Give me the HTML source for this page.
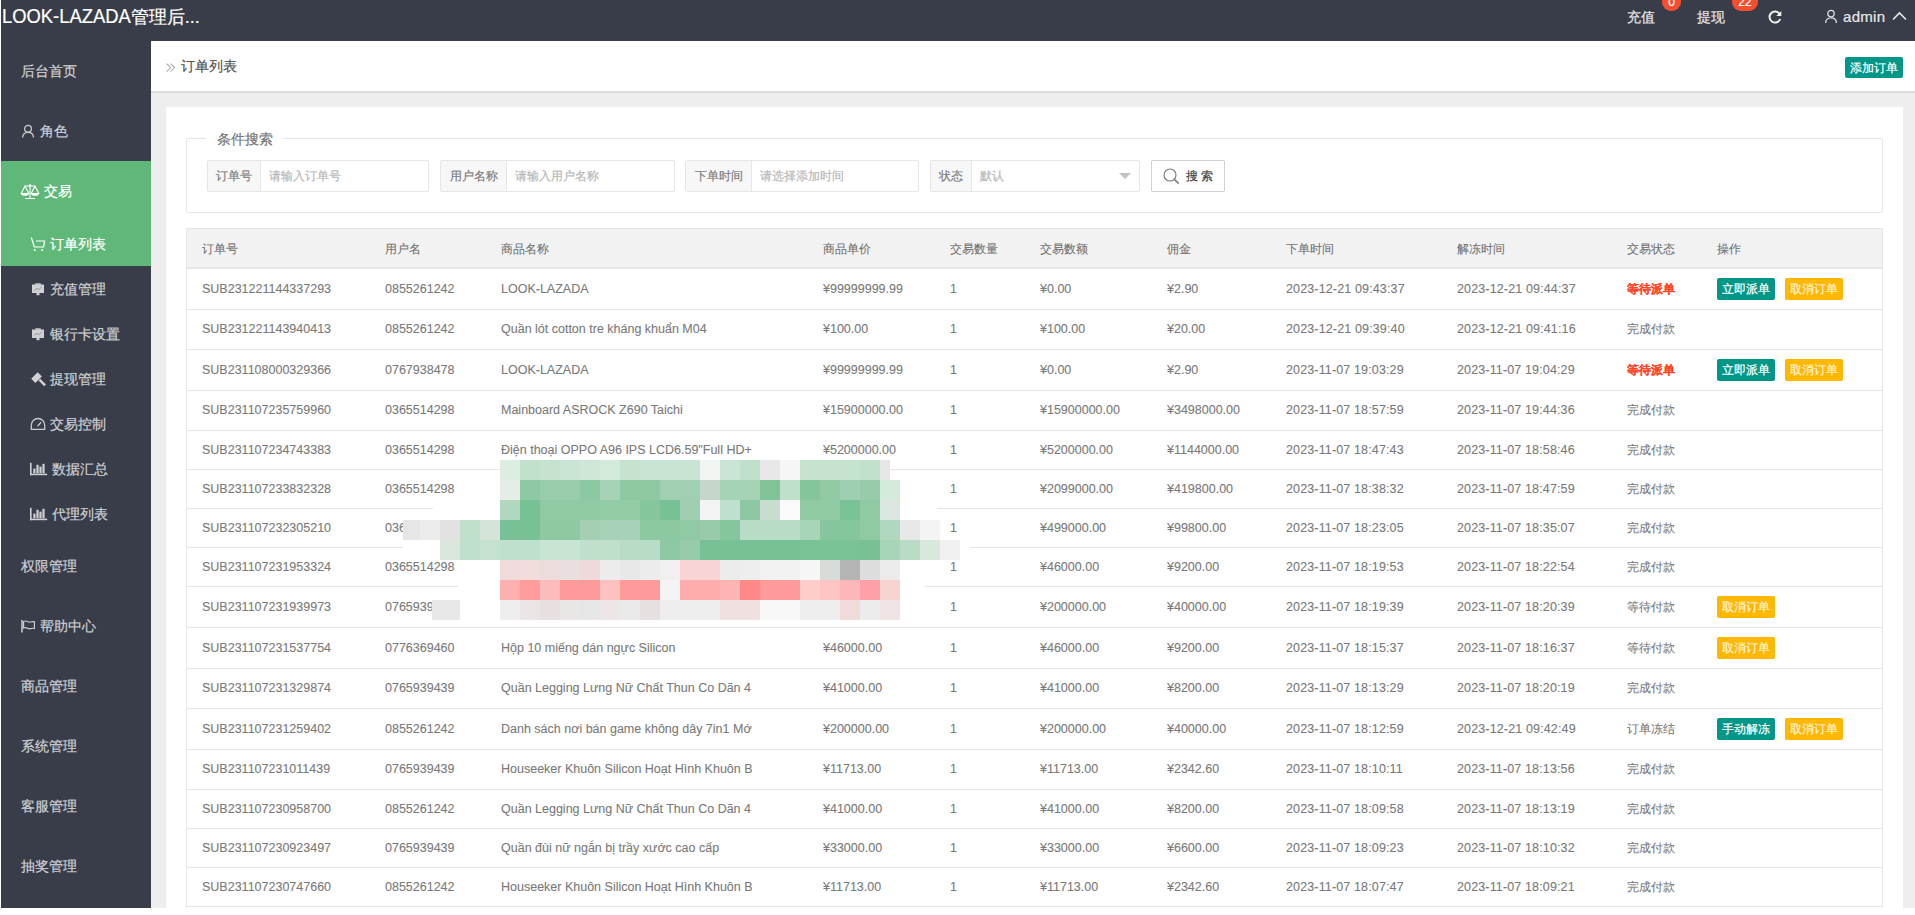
<!DOCTYPE html><html><head><meta charset="utf-8"><style>
*{margin:0;padding:0;box-sizing:border-box}
html,body{width:1915px;height:915px;overflow:hidden;background:#fff;font-family:"Liberation Sans",sans-serif;-webkit-text-stroke-width:0.2px}
.a{position:absolute;white-space:nowrap}
#hdr{position:absolute;left:1px;top:0;width:1914px;height:41px;background:#393D49}
#side{position:absolute;left:1px;top:41px;width:150px;height:867px;background:#393D49}
#main{position:absolute;left:151px;top:41px;width:1764px;height:867px;background:#eeeeee}
#bc{position:absolute;left:151px;top:41px;width:1764px;height:52px;background:#fff;border-bottom:2px solid #dcdcdc}
#card{position:absolute;left:166px;top:107px;width:1737px;height:801px;background:#fff}
.nv{position:absolute;color:#cfd0d3;font-size:14px;line-height:20px;height:20px}
.nv svg{position:absolute;top:3px}
.g{background:#5FB878}
.t{position:absolute;font-size:12.5px;color:#7a7a7a;-webkit-text-stroke-width:0.1px;line-height:16px;height:16px;white-space:nowrap;overflow:hidden}
.th{color:#737373}
.btn{position:absolute;height:22px;width:58px;color:#fff;font-size:12px;line-height:22px;text-align:center;border-radius:2px}
.teal{background:#009688}
.warm{background:#FFB800;color:#fff3dc}
.inp{position:absolute;top:160px;height:32px;border:1px solid #e6e6e6;border-radius:2px;background:#fff}
.lab{position:absolute;left:0;top:0;height:30px;background:#f7f7f7;border-right:1px solid #e6e6e6;color:#7e7e7e;font-size:12px;line-height:30px;text-align:center}
.ph{position:absolute;top:0;height:30px;line-height:30px;color:#b8b8b8;font-size:12px;white-space:nowrap}
</style></head><body>
<div id="hdr"></div><div id="side"></div><div id="main"></div><div id="bc"></div><div id="card"></div>
<div class="a" style="left:2px;top:5px;font-size:18px;line-height:24px;color:#fff"><span style="display:inline-block;font-size:18.4px;transform:scaleY(1.1);transform-origin:0 18px">LOOK-LAZADA</span>管理后...</div>
<div class="a" style="left:1627px;top:6.5px;font-size:14px;line-height:20px;color:#e8e8e8">充值</div>
<div class="a" style="left:1697px;top:6.5px;font-size:14px;line-height:20px;color:#e8e8e8">提现</div>
<div class="a" style="left:1662px;top:-7px;width:19px;height:18px;border-radius:9px;background:#F4502F;color:#fff;font-size:12px;line-height:18px;text-align:center">0</div>
<div class="a" style="left:1732px;top:-7px;width:26px;height:18px;border-radius:9px;background:#F4502F;color:#fff;font-size:12px;line-height:18px;text-align:center">22</div>
<svg class="a" style="left:1767px;top:9px" width="16" height="16" viewBox="0 0 16 16"><path d="M12.6 5.0A5.5 5.5 0 1 0 13.2 10" fill="none" stroke="#f2f2f2" stroke-width="2"/><path d="M14.3 2v5H9.3z" fill="#f2f2f2"/></svg>
<svg class="a" style="left:1824px;top:9px" width="14" height="15" viewBox="0 0 14 15"><circle cx="7" cy="4.6" r="3.2" fill="none" stroke="#e0e0e0" stroke-width="1.3"/><path d="M1.6 14c0-3.2 2.3-5.2 5.4-5.2s5.4 2 5.4 5.2" fill="none" stroke="#e0e0e0" stroke-width="1.3"/></svg>
<div class="a" style="left:1843px;top:6.5px;font-size:15px;line-height:20px;color:#e8e8e8;letter-spacing:0.3px">admin</div>
<svg class="a" style="left:1892px;top:11px" width="15" height="10" viewBox="0 0 15 10"><path d="M1 8.5L7.5 2L14 8.5" fill="none" stroke="#e8e8e8" stroke-width="1.6"/></svg>
<div class="a g" style="left:1px;top:161px;width:150px;height:105px"></div>
<svg class="a" style="left:21px;top:124px" width="14" height="15" viewBox="0 0 14 15"><circle cx="7" cy="4.8" r="3.4" fill="none" stroke="#c9cacd" stroke-width="1.3"/><path d="M1.6 13.6c0-3.3 2.3-5.3 5.4-5.3s5.4 2 5.4 5.3" fill="none" stroke="#c9cacd" stroke-width="1.3"/></svg>
<svg class="a" style="left:20px;top:183px" width="20" height="17" viewBox="0 0 20 17"><g fill="none" stroke="#fff" stroke-width="1.1"><path d="M5 3h10M10 2.5v12.5M5 15.5h10"/><path d="M5 3L1.2 10.5h7.6z M15 3l-3.8 7.5h7.6z"/></g><path d="M1 10.5h8c0 1.6-1.8 2.3-4 2.3s-4-.7-4-2.3zM11 10.5h8c0 1.6-1.8 2.3-4 2.3s-4-.7-4-2.3z" fill="#fff"/><circle cx="10" cy="2.5" r="1.3" fill="#fff"/></svg>
<svg class="a" style="left:30px;top:236px" width="16" height="16" viewBox="0 0 16 16"><g fill="none" stroke="#fff" stroke-width="1.2"><path d="M1.3 1.5L4.4 11M6 5h8.6l-1 6H4.4"/></g><circle cx="4.8" cy="14" r="1" fill="#fff"/><circle cx="12.2" cy="14" r="1" fill="#fff"/></svg>
<svg class="a" style="left:31px;top:283px" width="14" height="13" viewBox="0 0 14 13"><rect x="1" y="1.5" width="12" height="8.5" fill="#d0d1d4"/><rect x="4.3" y="0.3" width="5.5" height="1.5" fill="#d0d1d4"/><rect x="5.5" y="10" width="3" height="2.2" fill="#d0d1d4"/><path d="M3.3 7.3l2.5-2 2 1.3 3-2.6" stroke="#8a8c92" stroke-width="0.9" fill="none"/></svg>
<svg class="a" style="left:31px;top:328px" width="14" height="13" viewBox="0 0 14 13"><rect x="1" y="1.5" width="12" height="8.5" fill="#d0d1d4"/><rect x="4.3" y="0.3" width="5.5" height="1.5" fill="#d0d1d4"/><rect x="5.5" y="10" width="3" height="2.2" fill="#d0d1d4"/><path d="M3.3 7.3l2.5-2 2 1.3 3-2.6" stroke="#8a8c92" stroke-width="0.9" fill="none"/></svg>
<svg class="a" style="left:30px;top:371px" width="17" height="17" viewBox="0 0 17 17"><g fill="#d0d1d4"><path d="M1.2 7.7L7.7 1.2l4.2 4.2-6.5 6.5z"/><path d="M8.5 9.6l1.8-1.8 5.7 5.7-1.8 1.8z"/></g></svg>
<svg class="a" style="left:30px;top:417px" width="16" height="14" viewBox="0 0 16 14"><path d="M1.3 12.3V8.2a6.7 6.7 0 0 1 13.4 0v4.1z" fill="none" stroke="#c9cacd" stroke-width="1.3"/><path d="M7.5 9.2l3.6-3.9" stroke="#c9cacd" stroke-width="1.3"/></svg>
<svg class="a" style="left:29px;top:462px" width="19" height="14" viewBox="0 0 19 14"><g fill="#d0d1d4"><rect x="1" y="0.8" width="1.6" height="12.4"/><rect x="1" y="11.6" width="17.2" height="1.6"/><rect x="4.3" y="6.6" width="2.2" height="4.6"/><rect x="7.4" y="2.8" width="2.2" height="8.4"/><rect x="10.4" y="4.6" width="2.2" height="6.6"/><rect x="13.4" y="1.8" width="2.2" height="9.4"/></g></svg>
<svg class="a" style="left:29px;top:507px" width="19" height="14" viewBox="0 0 19 14"><g fill="#d0d1d4"><rect x="1" y="0.8" width="1.6" height="12.4"/><rect x="1" y="11.6" width="17.2" height="1.6"/><rect x="4.3" y="6.6" width="2.2" height="4.6"/><rect x="7.4" y="2.8" width="2.2" height="8.4"/><rect x="10.4" y="4.6" width="2.2" height="6.6"/><rect x="13.4" y="1.8" width="2.2" height="9.4"/></g></svg>
<svg class="a" style="left:20px;top:619px" width="17" height="14" viewBox="0 0 17 14"><path d="M2 1v12.5" stroke="#c9cacd" stroke-width="1.6"/><path d="M3.6 2.4c2.5-1.5 4.2 1.3 7 .6 1.3-.3 2.6-.5 3.8-.3v6.6c-1.2-.2-2.5 0-3.8.3-2.8.7-4.5-2.1-7-.6z" fill="none" stroke="#c9cacd" stroke-width="1.2"/></svg>
<div class="nv" style="left:21px;top:61px;color:#cfd0d3">后台首页</div>
<div class="nv" style="left:40px;top:121px;color:#cfd0d3">角色</div>
<div class="nv" style="left:44px;top:181px;color:#fff">交易</div>
<div class="nv" style="left:50px;top:234px;color:#fff">订单列表</div>
<div class="nv" style="left:50px;top:279px;color:#cfd0d3">充值管理</div>
<div class="nv" style="left:50px;top:324px;color:#cfd0d3">银行卡设置</div>
<div class="nv" style="left:50px;top:369px;color:#cfd0d3">提现管理</div>
<div class="nv" style="left:50px;top:414px;color:#cfd0d3">交易控制</div>
<div class="nv" style="left:52px;top:459px;color:#cfd0d3">数据汇总</div>
<div class="nv" style="left:52px;top:504px;color:#cfd0d3">代理列表</div>
<div class="nv" style="left:21px;top:556px;color:#cfd0d3">权限管理</div>
<div class="nv" style="left:40px;top:616px;color:#cfd0d3">帮助中心</div>
<div class="nv" style="left:21px;top:676px;color:#cfd0d3">商品管理</div>
<div class="nv" style="left:21px;top:736px;color:#cfd0d3">系统管理</div>
<div class="nv" style="left:21px;top:796px;color:#cfd0d3">客服管理</div>
<div class="nv" style="left:21px;top:856px;color:#cfd0d3">抽奖管理</div>
<svg class="a" style="left:166px;top:63px" width="10" height="10" viewBox="0 0 10 10"><path d="M0.6 0.6L4.6 4.6L0.6 8.6M4.6 0.6L8.6 4.6L4.6 8.6" fill="none" stroke="#aaa" stroke-width="1.1"/></svg>
<div class="a" style="left:181px;top:56px;font-size:14px;line-height:20px;color:#555">订单列表</div>
<div class="btn teal" style="left:1845px;top:57px;height:21px">添加订单</div>
<div class="a" style="left:186px;top:138px;width:1697px;height:75px;border:1px solid #e6e6e6;border-radius:2px"></div>
<div class="a" style="left:206px;top:130px;width:77px;height:16px;background:#fff"></div>
<div class="a" style="left:217px;top:129px;font-size:14px;line-height:20px;color:#777">条件搜索</div>
<div class="inp" style="left:207px;width:222px"><div class="lab" style="width:53px">订单号</div><div class="ph" style="left:61px">请输入订单号</div></div>
<div class="inp" style="left:440px;width:235px"><div class="lab" style="width:66px">用户名称</div><div class="ph" style="left:74px">请输入用户名称</div></div>
<div class="inp" style="left:685px;width:234px"><div class="lab" style="width:66px">下单时间</div><div class="ph" style="left:74px">请选择添加时间</div></div>
<div class="inp" style="left:930px;width:210px"><div class="lab" style="width:41px">状态</div><div class="ph" style="left:49px">默认</div></div>
<svg class="a" style="left:1119px;top:172.5px" width="12" height="7" viewBox="0 0 12 7"><path d="M0 0h12L6 6z" fill="#c2c2c2"/></svg>
<div class="a" style="left:1151px;top:160px;width:74px;height:32px;border:1px solid #d2d2d2;border-radius:2px;background:#fff"></div>
<svg class="a" style="left:1162px;top:166.5px" width="19" height="19" viewBox="0 0 19 19"><circle cx="8" cy="8" r="6" fill="none" stroke="#808080" stroke-width="1.2"/><path d="M12.4 12.4l4.3 4.3" stroke="#808080" stroke-width="1.7"/></svg>
<div class="a" style="left:1186px;top:167px;font-size:12px;line-height:18px;color:#444;letter-spacing:3px">搜索</div>
<div class="a" style="left:186px;top:228px;width:1697px;height:40px;background:#f2f2f2;border:1px solid #e6e6e6"></div>
<div class="a" style="left:186px;top:228px;width:1px;height:680px;background:#e6e6e6"></div>
<div class="a" style="left:1882px;top:228px;width:1px;height:680px;background:#e6e6e6"></div>
<div class="a" style="left:186px;top:268px;width:1697px;height:1px;background:#e6e6e6"></div>
<div class="a" style="left:186px;top:309px;width:1697px;height:1px;background:#e6e6e6"></div>
<div class="a" style="left:186px;top:349px;width:1697px;height:1px;background:#e6e6e6"></div>
<div class="a" style="left:186px;top:390px;width:1697px;height:1px;background:#e6e6e6"></div>
<div class="a" style="left:186px;top:430px;width:1697px;height:1px;background:#e6e6e6"></div>
<div class="a" style="left:186px;top:469px;width:1697px;height:1px;background:#e6e6e6"></div>
<div class="a" style="left:186px;top:508px;width:1697px;height:1px;background:#e6e6e6"></div>
<div class="a" style="left:186px;top:547px;width:1697px;height:1px;background:#e6e6e6"></div>
<div class="a" style="left:186px;top:586px;width:1697px;height:1px;background:#e6e6e6"></div>
<div class="a" style="left:186px;top:627px;width:1697px;height:1px;background:#e6e6e6"></div>
<div class="a" style="left:186px;top:668px;width:1697px;height:1px;background:#e6e6e6"></div>
<div class="a" style="left:186px;top:708px;width:1697px;height:1px;background:#e6e6e6"></div>
<div class="a" style="left:186px;top:749px;width:1697px;height:1px;background:#e6e6e6"></div>
<div class="a" style="left:186px;top:789px;width:1697px;height:1px;background:#e6e6e6"></div>
<div class="a" style="left:186px;top:828px;width:1697px;height:1px;background:#e6e6e6"></div>
<div class="a" style="left:186px;top:867px;width:1697px;height:1px;background:#e6e6e6"></div>
<div class="a" style="left:186px;top:906px;width:1697px;height:1px;background:#e6e6e6"></div>
<div class="t th" style="left:202px;top:241px"><span style="font-size:12px">订单号</span></div>
<div class="t th" style="left:385px;top:241px"><span style="font-size:12px">用户名</span></div>
<div class="t th" style="left:501px;top:241px"><span style="font-size:12px">商品名称</span></div>
<div class="t th" style="left:823px;top:241px"><span style="font-size:12px">商品单价</span></div>
<div class="t th" style="left:950px;top:241px"><span style="font-size:12px">交易数量</span></div>
<div class="t th" style="left:1040px;top:241px"><span style="font-size:12px">交易数额</span></div>
<div class="t th" style="left:1167px;top:241px"><span style="font-size:12px">佣金</span></div>
<div class="t th" style="left:1286px;top:241px"><span style="font-size:12px">下单时间</span></div>
<div class="t th" style="left:1457px;top:241px"><span style="font-size:12px">解冻时间</span></div>
<div class="t th" style="left:1627px;top:241px"><span style="font-size:12px">交易状态</span></div>
<div class="t th" style="left:1717px;top:241px"><span style="font-size:12px">操作</span></div>
<div class="t" style="left:202px;top:280.5px;">SUB231221144337293</div>
<div class="t" style="left:385px;top:280.5px;">0855261242</div>
<div class="t" style="left:501px;top:280.5px;width:251px;">LOOK-LAZADA</div>
<div class="t" style="left:823px;top:280.5px;">¥99999999.99</div>
<div class="t" style="left:950px;top:280.5px;">1</div>
<div class="t" style="left:1040px;top:280.5px;">¥0.00</div>
<div class="t" style="left:1167px;top:280.5px;">¥2.90</div>
<div class="t" style="left:1286px;top:280.5px;letter-spacing:0.14px;">2023-12-21 09:43:37</div>
<div class="t" style="left:1457px;top:280.5px;letter-spacing:0.14px;">2023-12-21 09:44:37</div>
<div class="t" style="left:1627px;top:280.5px;color:#FF4628;font-weight:bold;"><span style="font-size:12px">等待派单</span></div>
<div class="btn teal" style="left:1717px;top:277.5px">立即派单</div>
<div class="btn warm" style="left:1785px;top:277.5px">取消订单</div>
<div class="t" style="left:202px;top:321.0px;">SUB231221143940413</div>
<div class="t" style="left:385px;top:321.0px;">0855261242</div>
<div class="t" style="left:501px;top:321.0px;width:251px;">Quần lót cotton tre kháng khuẩn M04</div>
<div class="t" style="left:823px;top:321.0px;">¥100.00</div>
<div class="t" style="left:950px;top:321.0px;">1</div>
<div class="t" style="left:1040px;top:321.0px;">¥100.00</div>
<div class="t" style="left:1167px;top:321.0px;">¥20.00</div>
<div class="t" style="left:1286px;top:321.0px;letter-spacing:0.14px;">2023-12-21 09:39:40</div>
<div class="t" style="left:1457px;top:321.0px;letter-spacing:0.14px;">2023-12-21 09:41:16</div>
<div class="t" style="left:1627px;top:321.0px;"><span style="font-size:12px">完成付款</span></div>
<div class="t" style="left:202px;top:361.5px;">SUB231108000329366</div>
<div class="t" style="left:385px;top:361.5px;">0767938478</div>
<div class="t" style="left:501px;top:361.5px;width:251px;">LOOK-LAZADA</div>
<div class="t" style="left:823px;top:361.5px;">¥99999999.99</div>
<div class="t" style="left:950px;top:361.5px;">1</div>
<div class="t" style="left:1040px;top:361.5px;">¥0.00</div>
<div class="t" style="left:1167px;top:361.5px;">¥2.90</div>
<div class="t" style="left:1286px;top:361.5px;letter-spacing:0.14px;">2023-11-07 19:03:29</div>
<div class="t" style="left:1457px;top:361.5px;letter-spacing:0.14px;">2023-11-07 19:04:29</div>
<div class="t" style="left:1627px;top:361.5px;color:#FF4628;font-weight:bold;"><span style="font-size:12px">等待派单</span></div>
<div class="btn teal" style="left:1717px;top:358.5px">立即派单</div>
<div class="btn warm" style="left:1785px;top:358.5px">取消订单</div>
<div class="t" style="left:202px;top:402.0px;">SUB231107235759960</div>
<div class="t" style="left:385px;top:402.0px;">0365514298</div>
<div class="t" style="left:501px;top:402.0px;width:251px;">Mainboard ASROCK Z690 Taichi</div>
<div class="t" style="left:823px;top:402.0px;">¥15900000.00</div>
<div class="t" style="left:950px;top:402.0px;">1</div>
<div class="t" style="left:1040px;top:402.0px;">¥15900000.00</div>
<div class="t" style="left:1167px;top:402.0px;">¥3498000.00</div>
<div class="t" style="left:1286px;top:402.0px;letter-spacing:0.14px;">2023-11-07 18:57:59</div>
<div class="t" style="left:1457px;top:402.0px;letter-spacing:0.14px;">2023-11-07 19:44:36</div>
<div class="t" style="left:1627px;top:402.0px;"><span style="font-size:12px">完成付款</span></div>
<div class="t" style="left:202px;top:441.5px;">SUB231107234743383</div>
<div class="t" style="left:385px;top:441.5px;">0365514298</div>
<div class="t" style="left:501px;top:441.5px;width:251px;">Điện thoại OPPO A96 IPS LCD6.59&quot;Full HD+</div>
<div class="t" style="left:823px;top:441.5px;">¥5200000.00</div>
<div class="t" style="left:950px;top:441.5px;">1</div>
<div class="t" style="left:1040px;top:441.5px;">¥5200000.00</div>
<div class="t" style="left:1167px;top:441.5px;">¥1144000.00</div>
<div class="t" style="left:1286px;top:441.5px;letter-spacing:0.14px;">2023-11-07 18:47:43</div>
<div class="t" style="left:1457px;top:441.5px;letter-spacing:0.14px;">2023-11-07 18:58:46</div>
<div class="t" style="left:1627px;top:441.5px;"><span style="font-size:12px">完成付款</span></div>
<div class="t" style="left:202px;top:480.5px;">SUB231107233832328</div>
<div class="t" style="left:385px;top:480.5px;">0365514298</div>
<div class="t" style="left:950px;top:480.5px;">1</div>
<div class="t" style="left:1040px;top:480.5px;">¥2099000.00</div>
<div class="t" style="left:1167px;top:480.5px;">¥419800.00</div>
<div class="t" style="left:1286px;top:480.5px;letter-spacing:0.14px;">2023-11-07 18:38:32</div>
<div class="t" style="left:1457px;top:480.5px;letter-spacing:0.14px;">2023-11-07 18:47:59</div>
<div class="t" style="left:1627px;top:480.5px;"><span style="font-size:12px">完成付款</span></div>
<div class="t" style="left:202px;top:519.5px;">SUB231107232305210</div>
<div class="t" style="left:385px;top:519.5px;">0365514298</div>
<div class="t" style="left:950px;top:519.5px;">1</div>
<div class="t" style="left:1040px;top:519.5px;">¥499000.00</div>
<div class="t" style="left:1167px;top:519.5px;">¥99800.00</div>
<div class="t" style="left:1286px;top:519.5px;letter-spacing:0.14px;">2023-11-07 18:23:05</div>
<div class="t" style="left:1457px;top:519.5px;letter-spacing:0.14px;">2023-11-07 18:35:07</div>
<div class="t" style="left:1627px;top:519.5px;"><span style="font-size:12px">完成付款</span></div>
<div class="t" style="left:202px;top:558.5px;">SUB231107231953324</div>
<div class="t" style="left:385px;top:558.5px;">0365514298</div>
<div class="t" style="left:950px;top:558.5px;">1</div>
<div class="t" style="left:1040px;top:558.5px;">¥46000.00</div>
<div class="t" style="left:1167px;top:558.5px;">¥9200.00</div>
<div class="t" style="left:1286px;top:558.5px;letter-spacing:0.14px;">2023-11-07 18:19:53</div>
<div class="t" style="left:1457px;top:558.5px;letter-spacing:0.14px;">2023-11-07 18:22:54</div>
<div class="t" style="left:1627px;top:558.5px;"><span style="font-size:12px">完成付款</span></div>
<div class="t" style="left:202px;top:598.5px;">SUB231107231939973</div>
<div class="t" style="left:385px;top:598.5px;">0765939439</div>
<div class="t" style="left:950px;top:598.5px;">1</div>
<div class="t" style="left:1040px;top:598.5px;">¥200000.00</div>
<div class="t" style="left:1167px;top:598.5px;">¥40000.00</div>
<div class="t" style="left:1286px;top:598.5px;letter-spacing:0.14px;">2023-11-07 18:19:39</div>
<div class="t" style="left:1457px;top:598.5px;letter-spacing:0.14px;">2023-11-07 18:20:39</div>
<div class="t" style="left:1627px;top:598.5px;"><span style="font-size:12px">等待付款</span></div>
<div class="btn warm" style="left:1717px;top:595.5px">取消订单</div>
<div class="t" style="left:202px;top:639.5px;">SUB231107231537754</div>
<div class="t" style="left:385px;top:639.5px;">0776369460</div>
<div class="t" style="left:501px;top:639.5px;width:251px;">Hộp 10 miếng dán ngực Silicon</div>
<div class="t" style="left:823px;top:639.5px;">¥46000.00</div>
<div class="t" style="left:950px;top:639.5px;">1</div>
<div class="t" style="left:1040px;top:639.5px;">¥46000.00</div>
<div class="t" style="left:1167px;top:639.5px;">¥9200.00</div>
<div class="t" style="left:1286px;top:639.5px;letter-spacing:0.14px;">2023-11-07 18:15:37</div>
<div class="t" style="left:1457px;top:639.5px;letter-spacing:0.14px;">2023-11-07 18:16:37</div>
<div class="t" style="left:1627px;top:639.5px;"><span style="font-size:12px">等待付款</span></div>
<div class="btn warm" style="left:1717px;top:636.5px">取消订单</div>
<div class="t" style="left:202px;top:680.0px;">SUB231107231329874</div>
<div class="t" style="left:385px;top:680.0px;">0765939439</div>
<div class="t" style="left:501px;top:680.0px;width:251px;">Quần Legging Lưng Nữ Chất Thun Co Dãn 4 Chiều</div>
<div class="t" style="left:823px;top:680.0px;">¥41000.00</div>
<div class="t" style="left:950px;top:680.0px;">1</div>
<div class="t" style="left:1040px;top:680.0px;">¥41000.00</div>
<div class="t" style="left:1167px;top:680.0px;">¥8200.00</div>
<div class="t" style="left:1286px;top:680.0px;letter-spacing:0.14px;">2023-11-07 18:13:29</div>
<div class="t" style="left:1457px;top:680.0px;letter-spacing:0.14px;">2023-11-07 18:20:19</div>
<div class="t" style="left:1627px;top:680.0px;"><span style="font-size:12px">完成付款</span></div>
<div class="t" style="left:202px;top:720.5px;">SUB231107231259402</div>
<div class="t" style="left:385px;top:720.5px;">0855261242</div>
<div class="t" style="left:501px;top:720.5px;width:251px;">Danh sách nơi bán game không dây 7in1 Mới</div>
<div class="t" style="left:823px;top:720.5px;">¥200000.00</div>
<div class="t" style="left:950px;top:720.5px;">1</div>
<div class="t" style="left:1040px;top:720.5px;">¥200000.00</div>
<div class="t" style="left:1167px;top:720.5px;">¥40000.00</div>
<div class="t" style="left:1286px;top:720.5px;letter-spacing:0.14px;">2023-11-07 18:12:59</div>
<div class="t" style="left:1457px;top:720.5px;letter-spacing:0.14px;">2023-12-21 09:42:49</div>
<div class="t" style="left:1627px;top:720.5px;"><span style="font-size:12px">订单冻结</span></div>
<div class="btn teal" style="left:1717px;top:717.5px">手动解冻</div>
<div class="btn warm" style="left:1785px;top:717.5px">取消订单</div>
<div class="t" style="left:202px;top:761.0px;">SUB231107231011439</div>
<div class="t" style="left:385px;top:761.0px;">0765939439</div>
<div class="t" style="left:501px;top:761.0px;width:251px;">Houseeker Khuôn Silicon Hoạt Hình Khuôn Bánh</div>
<div class="t" style="left:823px;top:761.0px;">¥11713.00</div>
<div class="t" style="left:950px;top:761.0px;">1</div>
<div class="t" style="left:1040px;top:761.0px;">¥11713.00</div>
<div class="t" style="left:1167px;top:761.0px;">¥2342.60</div>
<div class="t" style="left:1286px;top:761.0px;letter-spacing:0.14px;">2023-11-07 18:10:11</div>
<div class="t" style="left:1457px;top:761.0px;letter-spacing:0.14px;">2023-11-07 18:13:56</div>
<div class="t" style="left:1627px;top:761.0px;"><span style="font-size:12px">完成付款</span></div>
<div class="t" style="left:202px;top:800.5px;">SUB231107230958700</div>
<div class="t" style="left:385px;top:800.5px;">0855261242</div>
<div class="t" style="left:501px;top:800.5px;width:251px;">Quần Legging Lưng Nữ Chất Thun Co Dãn 4 Chiều</div>
<div class="t" style="left:823px;top:800.5px;">¥41000.00</div>
<div class="t" style="left:950px;top:800.5px;">1</div>
<div class="t" style="left:1040px;top:800.5px;">¥41000.00</div>
<div class="t" style="left:1167px;top:800.5px;">¥8200.00</div>
<div class="t" style="left:1286px;top:800.5px;letter-spacing:0.14px;">2023-11-07 18:09:58</div>
<div class="t" style="left:1457px;top:800.5px;letter-spacing:0.14px;">2023-11-07 18:13:19</div>
<div class="t" style="left:1627px;top:800.5px;"><span style="font-size:12px">完成付款</span></div>
<div class="t" style="left:202px;top:839.5px;">SUB231107230923497</div>
<div class="t" style="left:385px;top:839.5px;">0765939439</div>
<div class="t" style="left:501px;top:839.5px;width:251px;">Quần đùi nữ ngắn bị trầy xước cao cấp</div>
<div class="t" style="left:823px;top:839.5px;">¥33000.00</div>
<div class="t" style="left:950px;top:839.5px;">1</div>
<div class="t" style="left:1040px;top:839.5px;">¥33000.00</div>
<div class="t" style="left:1167px;top:839.5px;">¥6600.00</div>
<div class="t" style="left:1286px;top:839.5px;letter-spacing:0.14px;">2023-11-07 18:09:23</div>
<div class="t" style="left:1457px;top:839.5px;letter-spacing:0.14px;">2023-11-07 18:10:32</div>
<div class="t" style="left:1627px;top:839.5px;"><span style="font-size:12px">完成付款</span></div>
<div class="t" style="left:202px;top:878.5px;">SUB231107230747660</div>
<div class="t" style="left:385px;top:878.5px;">0855261242</div>
<div class="t" style="left:501px;top:878.5px;width:251px;">Houseeker Khuôn Silicon Hoạt Hình Khuôn Bánh</div>
<div class="t" style="left:823px;top:878.5px;">¥11713.00</div>
<div class="t" style="left:950px;top:878.5px;">1</div>
<div class="t" style="left:1040px;top:878.5px;">¥11713.00</div>
<div class="t" style="left:1167px;top:878.5px;">¥2342.60</div>
<div class="t" style="left:1286px;top:878.5px;letter-spacing:0.14px;">2023-11-07 18:07:47</div>
<div class="t" style="left:1457px;top:878.5px;letter-spacing:0.14px;">2023-11-07 18:09:21</div>
<div class="t" style="left:1627px;top:878.5px;"><span style="font-size:12px">完成付款</span></div>
<div class="a" style="left:403px;top:545px;width:37px;height:4px;background:#fff"></div>
<div class="a" style="left:958px;top:545px;width:12px;height:4px;background:#fff"></div>
<div class="a" style="left:433px;top:506px;width:67px;height:4px;background:#fff"></div>
<div class="a" style="left:458px;top:584px;width:42px;height:4px;background:#fff"></div>
<div class="a" style="left:900px;top:506px;width:37px;height:4px;background:#fff"></div>
<div class="a" style="left:900px;top:584px;width:25px;height:4px;background:#fff"></div>
<svg class="a" style="left:400px;top:460px" width="560" height="160" viewBox="0 0 560 160"><rect x="100" y="0" width="20" height="20" fill="#dcede2"/><rect x="120" y="0" width="20" height="20" fill="#c2e1cd"/><rect x="140" y="0" width="20" height="20" fill="#c6e3d0"/><rect x="160" y="0" width="20" height="20" fill="#cbe5d4"/><rect x="180" y="0" width="20" height="20" fill="#cfe7d7"/><rect x="200" y="0" width="20" height="20" fill="#d3e9da"/><rect x="220" y="0" width="20" height="20" fill="#c5e2cf"/><rect x="240" y="0" width="20" height="20" fill="#c8e4d2"/><rect x="260" y="0" width="20" height="20" fill="#c8e4d2"/><rect x="280" y="0" width="20" height="20" fill="#c8e4d2"/><rect x="300" y="0" width="20" height="20" fill="#f2f6f3"/><rect x="320" y="0" width="20" height="20" fill="#cbe5d4"/><rect x="340" y="0" width="20" height="20" fill="#bfe0cb"/><rect x="360" y="0" width="20" height="20" fill="#e8e8e8"/><rect x="380" y="0" width="20" height="20" fill="#f6f6f6"/><rect x="400" y="0" width="20" height="20" fill="#c6e3d0"/><rect x="420" y="0" width="20" height="20" fill="#c6e3d0"/><rect x="440" y="0" width="20" height="20" fill="#c6e3d0"/><rect x="460" y="0" width="20" height="20" fill="#c2e1cd"/><rect x="100" y="20" width="20" height="20" fill="#e6ece8"/><rect x="120" y="20" width="20" height="20" fill="#8fc9a4"/><rect x="140" y="20" width="20" height="20" fill="#98cdab"/><rect x="160" y="20" width="20" height="20" fill="#98cdab"/><rect x="180" y="20" width="20" height="20" fill="#8cc8a2"/><rect x="200" y="20" width="20" height="20" fill="#a6d3b6"/><rect x="220" y="20" width="20" height="20" fill="#8fc9a4"/><rect x="240" y="20" width="20" height="20" fill="#8fc9a4"/><rect x="260" y="20" width="20" height="20" fill="#a0d0b1"/><rect x="280" y="20" width="20" height="20" fill="#a0d0b1"/><rect x="300" y="20" width="20" height="20" fill="#c6d6ca"/><rect x="320" y="20" width="20" height="20" fill="#a6d3b6"/><rect x="340" y="20" width="20" height="20" fill="#a6d3b6"/><rect x="360" y="20" width="20" height="20" fill="#80c397"/><rect x="380" y="20" width="20" height="20" fill="#bfe0cb"/><rect x="400" y="20" width="20" height="20" fill="#84c59b"/><rect x="420" y="20" width="20" height="20" fill="#90c9a4"/><rect x="440" y="20" width="20" height="20" fill="#9fcfb0"/><rect x="460" y="20" width="20" height="20" fill="#98cba9"/><rect x="480" y="20" width="20" height="20" fill="#d4eadb"/><rect x="100" y="40" width="20" height="20" fill="#b0d8bf"/><rect x="120" y="40" width="20" height="20" fill="#78c196"/><rect x="140" y="40" width="20" height="20" fill="#90caa5"/><rect x="160" y="40" width="20" height="20" fill="#90caa5"/><rect x="180" y="40" width="20" height="20" fill="#90caa5"/><rect x="200" y="40" width="20" height="20" fill="#93cca7"/><rect x="220" y="40" width="20" height="20" fill="#93cca7"/><rect x="240" y="40" width="20" height="20" fill="#85c69e"/><rect x="260" y="40" width="20" height="20" fill="#78c196"/><rect x="280" y="40" width="20" height="20" fill="#9fcfb0"/><rect x="300" y="40" width="20" height="20" fill="#f4f4f4"/><rect x="320" y="40" width="20" height="20" fill="#bfe0cc"/><rect x="340" y="40" width="20" height="20" fill="#8cc9a2"/><rect x="360" y="40" width="20" height="20" fill="#c8dccf"/><rect x="380" y="40" width="20" height="20" fill="#fafafa"/><rect x="400" y="40" width="20" height="20" fill="#90caa5"/><rect x="420" y="40" width="20" height="20" fill="#90caa5"/><rect x="440" y="40" width="20" height="20" fill="#7ac396"/><rect x="460" y="40" width="20" height="20" fill="#90caa5"/><rect x="480" y="40" width="20" height="20" fill="#dce8df"/><rect x="100" y="60" width="20" height="20" fill="#78c196"/><rect x="120" y="60" width="20" height="20" fill="#78c196"/><rect x="140" y="60" width="20" height="20" fill="#8ec9a3"/><rect x="160" y="60" width="20" height="20" fill="#8ec9a3"/><rect x="180" y="60" width="20" height="20" fill="#a4cfb3"/><rect x="200" y="60" width="20" height="20" fill="#a8d2b7"/><rect x="220" y="60" width="20" height="20" fill="#a8d2b7"/><rect x="240" y="60" width="20" height="20" fill="#8cc9a2"/><rect x="260" y="60" width="20" height="20" fill="#8cc9a2"/><rect x="280" y="60" width="20" height="20" fill="#90caa5"/><rect x="300" y="60" width="20" height="20" fill="#98cba9"/><rect x="320" y="60" width="20" height="20" fill="#85c69e"/><rect x="340" y="60" width="20" height="20" fill="#b8dcc6"/><rect x="360" y="60" width="20" height="20" fill="#b8dcc6"/><rect x="380" y="60" width="20" height="20" fill="#b8dcc6"/><rect x="400" y="60" width="20" height="20" fill="#a8d4b8"/><rect x="420" y="60" width="20" height="20" fill="#85c69e"/><rect x="440" y="60" width="20" height="20" fill="#85c69e"/><rect x="460" y="60" width="20" height="20" fill="#90caa5"/><rect x="480" y="60" width="20" height="20" fill="#b0d8bf"/><rect x="500" y="60" width="20" height="20" fill="#e8e8e8"/><rect x="520" y="60" width="20" height="20" fill="#f4f4f4"/><rect x="100" y="80" width="20" height="20" fill="#bfe0cc"/><rect x="120" y="80" width="20" height="20" fill="#bfe0cc"/><rect x="140" y="80" width="20" height="20" fill="#c8e4d2"/><rect x="160" y="80" width="20" height="20" fill="#c8e4d2"/><rect x="180" y="80" width="20" height="20" fill="#c0e0cc"/><rect x="200" y="80" width="20" height="20" fill="#c0e0cc"/><rect x="220" y="80" width="20" height="20" fill="#b8dcc6"/><rect x="240" y="80" width="20" height="20" fill="#b8dcc6"/><rect x="260" y="80" width="20" height="20" fill="#8fc9a4"/><rect x="280" y="80" width="20" height="20" fill="#98cba9"/><rect x="300" y="80" width="20" height="20" fill="#78c196"/><rect x="320" y="80" width="20" height="20" fill="#78c196"/><rect x="340" y="80" width="20" height="20" fill="#78c196"/><rect x="360" y="80" width="20" height="20" fill="#78c196"/><rect x="380" y="80" width="20" height="20" fill="#78c196"/><rect x="400" y="80" width="20" height="20" fill="#7ac396"/><rect x="420" y="80" width="20" height="20" fill="#7ac396"/><rect x="440" y="80" width="20" height="20" fill="#7ac396"/><rect x="460" y="80" width="20" height="20" fill="#78c196"/><rect x="480" y="80" width="20" height="20" fill="#a8d4b8"/><rect x="500" y="80" width="20" height="20" fill="#b8dcc6"/><rect x="520" y="80" width="20" height="20" fill="#d8e8dd"/><rect x="540" y="80" width="20" height="20" fill="#f0f0f0"/><rect x="100" y="100" width="20" height="20" fill="#f0dada"/><rect x="120" y="100" width="20" height="20" fill="#f2dcdc"/><rect x="140" y="100" width="20" height="20" fill="#ecdcdc"/><rect x="160" y="100" width="20" height="20" fill="#eadfdf"/><rect x="180" y="100" width="20" height="20" fill="#eedada"/><rect x="200" y="100" width="20" height="20" fill="#ececec"/><rect x="220" y="100" width="20" height="20" fill="#e8e8e8"/><rect x="240" y="100" width="20" height="20" fill="#ececec"/><rect x="260" y="100" width="20" height="20" fill="#f0f0f0"/><rect x="280" y="100" width="20" height="20" fill="#f8d4d4"/><rect x="300" y="100" width="20" height="20" fill="#f8d4d4"/><rect x="320" y="100" width="20" height="20" fill="#ececec"/><rect x="340" y="100" width="20" height="20" fill="#eeeeee"/><rect x="360" y="100" width="20" height="20" fill="#f2f2f2"/><rect x="380" y="100" width="20" height="20" fill="#f2f2f2"/><rect x="400" y="100" width="20" height="20" fill="#f6f6f6"/><rect x="420" y="100" width="20" height="20" fill="#d8dcd9"/><rect x="440" y="100" width="20" height="20" fill="#b4b4b4"/><rect x="460" y="100" width="20" height="20" fill="#dddddd"/><rect x="480" y="100" width="20" height="20" fill="#ebebeb"/><rect x="100" y="120" width="20" height="20" fill="#fcb0b0"/><rect x="120" y="120" width="20" height="20" fill="#ff9c9c"/><rect x="140" y="120" width="20" height="20" fill="#fcbcbc"/><rect x="160" y="120" width="20" height="20" fill="#ff9a9a"/><rect x="180" y="120" width="20" height="20" fill="#ff9a9a"/><rect x="200" y="120" width="20" height="20" fill="#fcc0c0"/><rect x="220" y="120" width="20" height="20" fill="#ff9a9a"/><rect x="240" y="120" width="20" height="20" fill="#ff9a9a"/><rect x="260" y="120" width="20" height="20" fill="#f4f4f4"/><rect x="280" y="120" width="20" height="20" fill="#ffacac"/><rect x="300" y="120" width="20" height="20" fill="#ffacac"/><rect x="320" y="120" width="20" height="20" fill="#ffb4b4"/><rect x="340" y="120" width="20" height="20" fill="#ff8888"/><rect x="360" y="120" width="20" height="20" fill="#ff9a9a"/><rect x="380" y="120" width="20" height="20" fill="#ff9a9a"/><rect x="400" y="120" width="20" height="20" fill="#ffcccc"/><rect x="420" y="120" width="20" height="20" fill="#ffc4c4"/><rect x="440" y="120" width="20" height="20" fill="#fcb8b8"/><rect x="460" y="120" width="20" height="20" fill="#ffa0a8"/><rect x="480" y="120" width="20" height="20" fill="#f8d4d0"/><rect x="100" y="140" width="20" height="20" fill="#eeeeee"/><rect x="120" y="140" width="20" height="20" fill="#ebe4e4"/><rect x="140" y="140" width="20" height="20" fill="#e8e0e0"/><rect x="160" y="140" width="20" height="20" fill="#eae6e6"/><rect x="180" y="140" width="20" height="20" fill="#e6e6e6"/><rect x="200" y="140" width="20" height="20" fill="#ede6e6"/><rect x="220" y="140" width="20" height="20" fill="#eaeaea"/><rect x="240" y="140" width="20" height="20" fill="#e6e0e0"/><rect x="260" y="140" width="20" height="20" fill="#eeeeee"/><rect x="280" y="140" width="20" height="20" fill="#eeeeee"/><rect x="300" y="140" width="20" height="20" fill="#eeeeee"/><rect x="320" y="140" width="20" height="20" fill="#f0e0e0"/><rect x="340" y="140" width="20" height="20" fill="#f0e0e0"/><rect x="360" y="140" width="20" height="20" fill="#f8f8f8"/><rect x="380" y="140" width="20" height="20" fill="#f8f8f8"/><rect x="400" y="140" width="20" height="20" fill="#eeeeee"/><rect x="420" y="140" width="20" height="20" fill="#eeeeee"/><rect x="440" y="140" width="20" height="20" fill="#f0dada"/><rect x="460" y="140" width="20" height="20" fill="#ececec"/><rect x="480" y="140" width="20" height="20" fill="#f0e4e4"/><rect x="3" y="60" width="17" height="20" fill="#e6e6e6"/><rect x="20" y="60" width="20" height="20" fill="#ebebeb"/><rect x="40" y="60" width="20" height="20" fill="#e2e2e2"/><rect x="60" y="60" width="20" height="20" fill="#c0e0cc"/><rect x="80" y="60" width="20" height="20" fill="#d4e4d8"/><rect x="40" y="80" width="20" height="20" fill="#d8e6dc"/><rect x="60" y="80" width="20" height="20" fill="#bfe0cc"/><rect x="80" y="80" width="20" height="20" fill="#c4e2cf"/><rect x="32" y="140" width="28" height="20" fill="#e8e8e8"/><rect x="480" y="0" width="10" height="20" fill="#e6e6e6"/></svg>
</body></html>
